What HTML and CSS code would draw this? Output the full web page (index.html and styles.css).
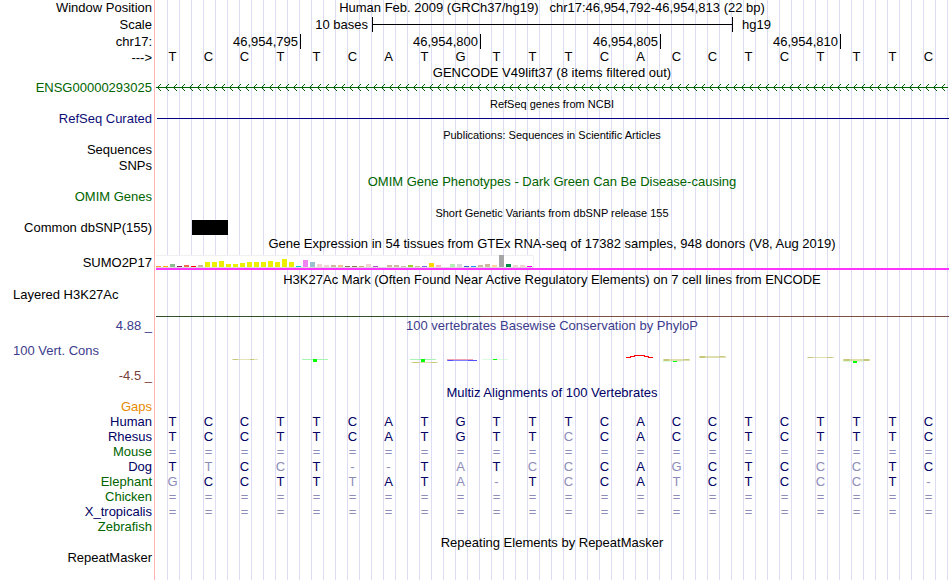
FILE: index.html
```html
<!DOCTYPE html>
<html lang="en">
<head>
    <meta charset="UTF-8">
    <meta name="viewport" content="width=device-width, initial-scale=1.0">
    <title>Human chr17:46,954,792-46,954,813 Genome Browser</title>
    <link rel="stylesheet" href="styles.css">
</head>
<body>
<main class="tracks">

    <!-- Ruler -->
    <div class="row">
        <div class="label">Window Position</div>
        <div class="title">Human Feb. 2009 (GRCh37/hg19) &nbsp; chr17:46,954,792-46,954,813 (22 bp)</div>
    </div>
    <div class="row ruler">
        <div class="label">Scale</div>
        <div class="columns">
            <span class="scale-size">10 bases</span>
            <span class="scale-bar"></span>
            <span class="scale-db">hg19</span>
        </div>
    </div>
    <div class="row ruler">
        <div class="label">chr17:</div>
        <div class="columns">
            <span class="tick first">46,954,795</span>
            <span class="tick">46,954,800</span>
            <span class="tick">46,954,805</span>
            <span class="tick">46,954,810</span>
        </div>
    </div>
    <div class="row strand">
        <div class="label">---&gt;</div>
        <div class="columns bases" id="sequence"></div>
    </div>

    <!-- Genes -->
    <div class="row head"><h2 class="title">GENCODE V49lift37 (8 items filtered out)</h2></div>
    <div class="row">
        <div class="label green">ENSG00000293025</div>
        <svg class="intron" width="100%" height="7" shape-rendering="crispEdges">
            <defs>
                <pattern id="arrows" width="8" height="7" patternUnits="userSpaceOnUse">
                    <path d="M0 3h8v1h-8zM1 3h1v1h-1zM2 2h1v3h-1zM3 1h1v1h-1zM3 5h1v1h-1zM4 0h1v1h-1zM4 6h1v1h-1z" fill="#006400"/>
                </pattern>
            </defs>
            <rect width="100%" height="7" fill="url(#arrows)"/>
        </svg>
    </div>
    <div class="row head"><h2 class="title small">RefSeq genes from NCBI</h2></div>
    <div class="row">
        <div class="label blue">RefSeq Curated</div>
        <div class="gene-line"></div>
    </div>

    <!-- Literature and phenotypes -->
    <div class="row head"><h2 class="title small">Publications: Sequences in Scientific Articles</h2></div>
    <div class="row"><div class="label">Sequences</div></div>
    <div class="row"><div class="label">SNPs</div></div>
    <div class="row head"><h2 class="title green">OMIM Gene Phenotypes - Dark Green Can Be Disease-causing</h2></div>
    <div class="row"><div class="label green">OMIM Genes</div></div>

    <!-- Variants -->
    <div class="row head"><h2 class="title small">Short Genetic Variants from dbSNP release 155</h2></div>
    <div class="row">
        <div class="label">Common dbSNP(155)</div>
        <div class="columns"><span class="snp"></span></div>
    </div>

    <!-- GTEx -->
    <div class="row head"><h2 class="title">Gene Expression in 54 tissues from GTEx RNA-seq of 17382 samples, 948 donors (V8, Aug 2019)</h2></div>
    <div class="row gtex">
        <div class="label">SUMO2P17</div>
        <div class="expression">
            <div class="bars" id="tissues"></div>
        </div>
    </div>

    <!-- Regulation -->
    <div class="row head"><h2 class="title">H3K27Ac Mark (Often Found Near Active Regulatory Elements) on 7 cell lines from ENCODE</h2></div>
    <div class="row layered">
        <div class="label left">Layered H3K27Ac</div>
        <div class="signal"></div>
    </div>

    <!-- Conservation -->
    <div class="row head">
        <div class="label violet">4.88 _</div>
        <h2 class="title violet">100 vertebrates Basewise Conservation by PhyloP</h2>
    </div>
    <div class="row cons">
        <div class="cons-labels">
            <div class="label left violet">100 Vert. Cons</div>
            <div class="label brown">-4.5 _</div>
        </div>
        <svg class="phylop" viewBox="0 0 792 51" shape-rendering="crispEdges">
            <g fill="#c8c87a">
                <path d="M76 25h26v1h-26z" opacity=".5"/>
                <path d="M77 25h5v1h-5zM94 25h4v1h-4z"/>
                <path d="M255 28h27v1h-27z" opacity=".6"/>
                <path d="M257 28h6v1h-6zM275 28h5v1h-5z"/>
                <path d="M507 25h27v2h-27z" opacity=".6"/>
                <path d="M508 25h5v2h-5zM528 25h5v1h-5z"/>
                <path d="M543 22h27v2h-27z" opacity=".6"/>
                <path d="M544 22h5v2h-5zM563 22h5v1h-5z"/>
                <path d="M651 23h27v1h-27z" opacity=".6"/>
                <path d="M652 23h5v1h-5zM671 23h5v1h-5z"/>
                <path d="M687 25h27v2h-27z" opacity=".6"/>
                <path d="M688 25h6v2h-6zM708 25h5v2h-5z"/>
            </g>
            <g fill="#a8f4b4">
                <path d="M146 25h26v1h-26zM254 25h26v1h-26z"/>
                <path d="M326 25h26v1h-26z" opacity=".4"/>
                <path d="M506 27h20v1h-20zM686 27h22v1h-22z" opacity=".4"/>
            </g>
            <path d="M157 25h4v3h-4zM265 25h4v3h-4zM337 25h4v1h-4zM517 27h4v1h-4zM697 27h4v2h-4z" fill="#00ff00"/>
            <path d="M291 25h26v1h-26z" fill="#f0a0b0"/>
            <path d="M291 26h30v1h-30z" fill="#8080ff"/>
            <path d="M292 26h5v1h-5zM312 26h9v1h-9z" fill="#5050ff"/>
            <path d="M470 23h5v1h-5zM474 22h5v1h-5zM478 21h11v1h-11zM488 22h5v1h-5zM492 23h5v1h-5z" fill="#ff0000"/>
        </svg>
    </div>
    <h2 class="title align-title">Multiz Alignments of 100 Vertebrates</h2>
    <table class="alignment">
        <tbody id="species"></tbody>
    </table>

    <!-- Repeats -->
    <div class="row head"><h2 class="title">Repeating Elements by RepeatMasker</h2></div>
    <div class="row"><div class="label">RepeatMasker</div></div>
</main>

<script>
    var sequence = "TCCTTCATGTTTCACCTCTTTC";
    var unaligned = "======================";

    // lower case = base differs from human
    var species = [
        { name: "Gaps", color: "orange", bases: "" },
        { name: "Human", color: "navy", bases: sequence },
        { name: "Rhesus", color: "navy", bases: "TCCTTCATGTTcCACCTCTTTC" },
        { name: "Mouse", color: "green", bases: unaligned },
        { name: "Dog", color: "navy", bases: "TtCcT--TaTccCAgCTCccTC" },
        { name: "Elephant", color: "green", bases: "gCCTTtATa-TcCAtCTCccT-" },
        { name: "Chicken", color: "green", bases: unaligned },
        { name: "X_tropicalis", color: "navy", bases: unaligned },
        { name: "Zebrafish", color: "green", bases: "" }
    ];

    // [color, height] for each of the 54 tissues
    var tissues = [
        ["#ff9933", 1], ["#ffaa00", 1], ["#8fbc8f", 3], ["#8b1c62", 1], ["#ee6a50", 2], ["#ff0000", 1],
        ["#cdb79e", 2], ["#eeee00", 5], ["#eeee00", 5], ["#eeee00", 6], ["#eeee00", 3], ["#eeee00", 3],
        ["#eeee00", 4], ["#eeee00", 5], ["#eeee00", 5], ["#eeee00", 5], ["#eeee00", 6], ["#eeee00", 5],
        ["#eeee00", 8], ["#eeee00", 5], ["#00cdcd", 1], ["#ee82ee", 7], ["#9ac0cd", 5], ["#eed5d2", 3],
        ["#eed5d2", 2], ["#cdb79e", 2], ["#eec591", 2], ["#8b7355", 1], ["#8b7355", 1], ["#cdaa7d", 1],
        ["#eed5d2", 3], ["#b452cd", 1], ["#7a378b", 0], ["#cdb79e", 2], ["#cdb79e", 2], ["#cdb79e", 1],
        ["#9acd32", 2], ["#cdb79e", 1], ["#7a67ee", 1], ["#ffd700", 4], ["#ffb6c1", 2], ["#cd9b1d", 0],
        ["#b4eeb4", 3], ["#d9d9d9", 3], ["#3a5fcd", 1], ["#1e90ff", 1], ["#cdb79e", 2], ["#cdb79e", 3],
        ["#ffd39b", 2], ["#a6a6a6", 12], ["#008b45", 3], ["#eed5d2", 2], ["#eed5d2", 2], ["#ff00ff", 1]
    ];

    sequence.split("").forEach(function (base) {
        var span = document.createElement("span");
        span.innerText = base;
        document.getElementById("sequence").appendChild(span);
    });

    species.forEach(function (data) {
        var row = document.getElementById("species").insertRow();
        var name = document.createElement("th");
        name.scope = "row";
        name.className = data.color;
        name.innerText = data.name;
        row.appendChild(name);
        for (var i = 0; i < sequence.length; i++) {
            var base = data.bases.charAt(i);
            var cell = row.insertCell();
            cell.innerText = base.toUpperCase();
            if (!/[A-Z]/.test(base)) {
                cell.className = "mismatch";
            }
        }
    });

    tissues.forEach(function (tissue) {
        var bar = document.createElement("span");
        bar.style.height = tissue[1] + "px";
        bar.style.backgroundColor = tissue[0];
        document.getElementById("tissues").appendChild(bar);
    });
</script>
</body>
</html>
```

FILE: styles.css
```css
* {
    box-sizing: border-box;
}
body {
    margin: 0;
    background-color: white;
    color: black;
    font-family: "Liberation Sans", Arial, Helvetica, sans-serif;
    font-size: 13px;
    line-height: 15px;
}
/* red divider, white label area, then one guide line every 12px */
.tracks {
    min-height: 100vh;
    background:
        linear-gradient(#ffb4b4, #ffb4b4) 154px 0 / 1px 100% no-repeat,
        linear-gradient(white, white) 0 0 / 156px 100% no-repeat,
        linear-gradient(to right, transparent 11px, #dcdcf5 11px) 0 0 / 12px 100%;
}
.row {
    display: grid;
    grid-template-columns: 154px 1fr;
    column-gap: 2px;
    min-height: 16px;
    padding-right: 2px;
}
.head,
.strand {
    min-height: 15px;
}
.ruler {
    min-height: 17px;
    align-items: center;
}
.label {
    padding-right: 2px;
    text-align: right;
    white-space: nowrap;
}
.left {
    padding-left: 13px;
    text-align: left;
}
.title {
    grid-column: 2;
    height: 15px;
    margin: 0;
    font-size: 13px;
    font-weight: normal;
    line-height: 16px;
    text-align: center;
    white-space: nowrap;
}
.small {
    font-size: 11px;
}

.green { color: #006400; }
.blue { color: #0c0c78; }
.navy { color: #000064; }
.violet { color: #3c3c8c; }
.brown { color: #78413c; }
.orange { color: #e68a00; }

.columns {
    display: grid;
    grid-template-columns: repeat(22, 1fr);
}
.scale-size {
    grid-column: 1 / 7;
    padding-right: 4px;
    text-align: right;
}
.scale-bar {
    grid-column: 7 / 17;
    margin-right: -1px;
    border: solid black;
    border-width: 0 1px;
    background: linear-gradient(black, black) 0 7px / 100% 1px no-repeat;
}
.scale-db {
    grid-column: 17 / 20;
    padding-left: 10px;
}
.tick {
    grid-column: span 5;
    margin-right: -1px;
    padding-right: 2px;
    border-right: 1px solid black;
    text-align: right;
}
.first {
    grid-column: span 4;
}
.bases span {
    padding-right: 3px;
    line-height: 13px;
    text-align: center;
}
.intron {
    display: block;
    margin-top: 4px;
}
.gene-line {
    height: 1px;
    margin: 7px -1px 0 1px;
    background-color: #000080;
}
.snp {
    grid-column: 2;
    height: 15px;
    background-color: black;
}

.gtex {
    min-height: 21px;
    padding-bottom: 2px;
    align-items: end;
}
.expression {
    margin-right: -1px;
    border-bottom: 2px solid #ff32ff;
}
.bars {
    display: flex;
    align-items: flex-end;
    gap: 2px;
    width: max-content;
    height: 13px;
    padding-right: 1px;
    border: 1px solid #f0f0f0;
    border-left: 0;
    border-bottom-color: #dcdcdc;
    background-color: white;
}
.bars span {
    width: 5px;
}

.layered {
    min-height: 31px;
}
.signal {
    height: 1px;
    margin: 29px -1px 0 0;
    background: linear-gradient(to right, #34502f 41%, #785046 41%);
}
.cons {
    min-height: 52px;
}
.cons-labels {
    display: grid;
    align-content: space-between;
    padding: 10px 0 2px;
}
.phylop {
    display: block;
    width: 100%;
    margin-top: 1px;
}

.align-title {
    height: 14px;
    padding: 0 2px 0 156px;
    color: #000064;
}
.alignment {
    width: 100%;
    margin-bottom: 1px;
    padding-right: 2px;
    border-spacing: 0;
    table-layout: fixed;
}
.alignment th {
    width: 156px;
    padding: 0 4px 0 0;
    font-weight: normal;
    text-align: right;
}
.alignment td {
    height: 15px;
    padding: 0 3px 0 0;
    color: #000064;
    text-align: center;
}
.alignment .mismatch {
    color: #8c8cb9;
}
```
